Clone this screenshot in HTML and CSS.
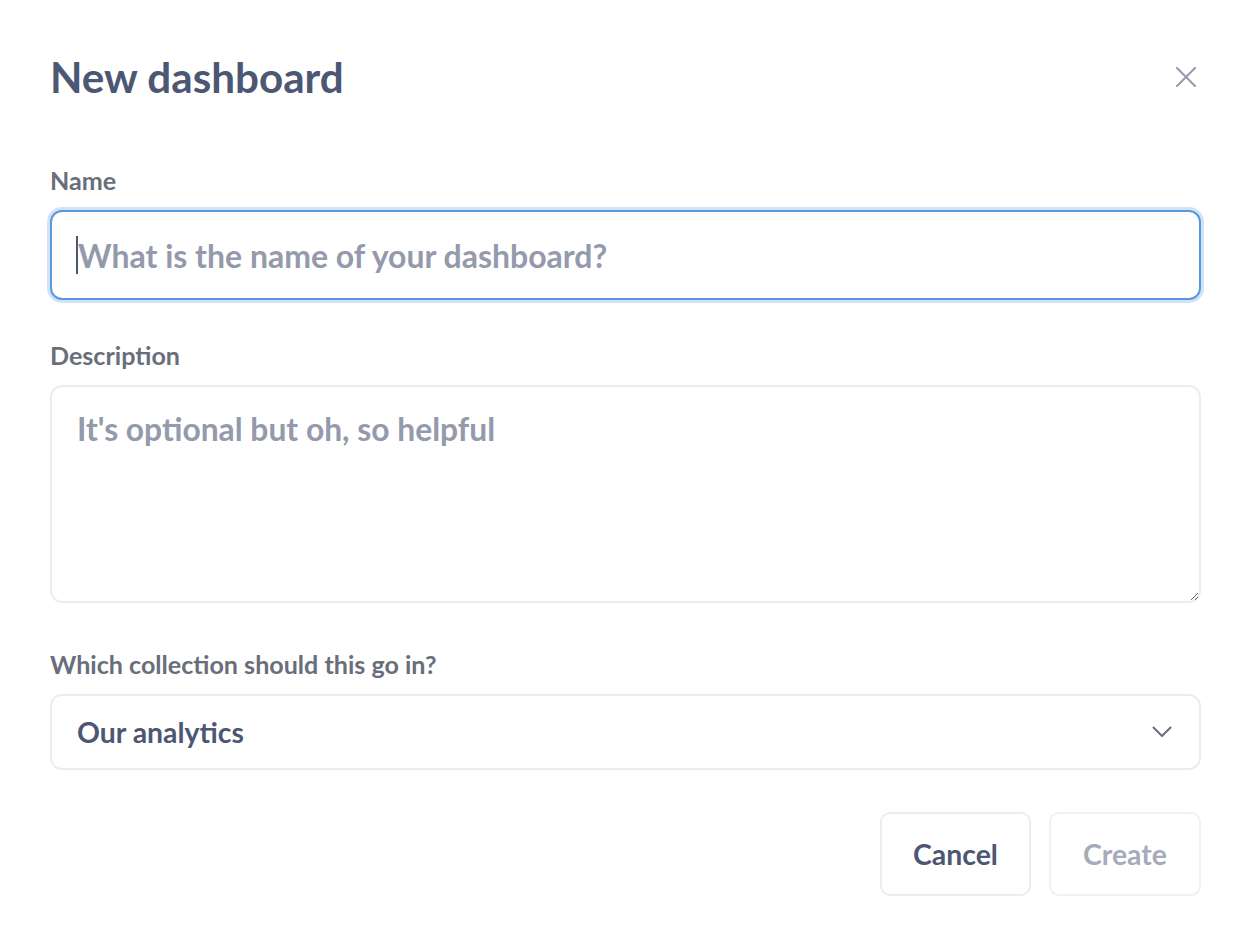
FILE: index.html
```html
<!DOCTYPE html>
<html lang="en">
<head>
<meta charset="utf-8">
<title>New dashboard</title>
<link rel="stylesheet" href="styles.css">
</head>
<body>
<div class="modal">
  <div class="modal-header">
    <h1 class="modal-title">New dashboard</h1>
    <button class="close-btn" aria-label="Close">
      <svg width="20" height="20" viewBox="0 0 20 20"><path d="M1 1 L19 19 M19 1 L1 19" stroke="#949aab" stroke-width="2" stroke-linecap="round" fill="none"/></svg>
    </button>
  </div>
  <form class="form">
    <label class="label label-name" for="name">Name</label>
    <div class="input-wrap">
      <input id="name" class="input input-focused" type="text" placeholder="What is the name of your dashboard?">
      <span class="caret"></span>
    </div>
    <label class="label label-desc" for="desc">Description</label>
    <textarea id="desc" class="textarea" placeholder="It's optional but oh, so helpful"></textarea>
    <label class="label label-coll">Which collection should this go in?</label>
    <div class="select">
      <span class="select-value">Our analytics</span>
      <svg class="chevron" width="20" height="12" viewBox="0 0 20 12"><path d="M1.5 1.5 L10 10 L18.5 1.5" stroke="#696e7b" stroke-width="2" fill="none" stroke-linecap="round" stroke-linejoin="round"/></svg>
    </div>
    <div class="actions">
      <button type="button" class="btn btn-cancel">Cancel</button>
      <button type="button" class="btn btn-create" disabled>Create</button>
    </div>
  </form>
</div>
</body>
</html>
```

FILE: styles.css
```css
* { box-sizing: border-box; }
html, body { margin: 0; padding: 0; background: #fff; }
body { font-family: Lato, "Open Sans", sans-serif; color: #4c5773; }

.modal {
  width: 1254px;
  height: 946px;
  padding: 53px 53px 0 50px;
}

.modal-header {
  display: flex;
  justify-content: space-between;
  align-items: center;
  height: 48px;
}
.modal-title {
  margin: 0;
  font-size: 42.2px;
  line-height: 48px;
  font-weight: 700;
  color: #4c5773;
}
.close-btn {
  background: none;
  border: 0;
  padding: 0;
  margin-right: 5px;
  width: 20px;
  height: 20px;
  display: flex;
}

.form {
  display: flex;
  flex-direction: column;
}

.label {
  display: block;
  font-size: 25.1px;
  line-height: 26px;
  font-weight: 700;
  color: #696e7b;
  margin-bottom: 17px;
}
.label-name { margin-top: 66px; }
.label-desc { margin-top: 42px; }
.label-coll { margin-top: 48px; }

.input, .textarea, .select {
  width: 100%;
  border: 2px solid #eeecec;
  border-radius: 12px;
  background: #fff;
  font-family: Lato, sans-serif;
  font-weight: 700;
  font-size: 32px;
  color: #4c5773;
}
.input-wrap { position: relative; }
.input {
  display: block;
  height: 90px;
  padding: 0 25px 0 26px;
  outline: none;
  caret-color: #4c5773;
}
.caret {
  position: absolute;
  left: 26px;
  top: 26px;
  width: 1.5px;
  height: 38px;
  background: #4c5773;
}
.input-focused {
  border-color: #5b97e0;
  box-shadow: 0 0 0 3px #d1e3f7;
}
.input::placeholder, .textarea::placeholder { color: #949aab; opacity: 1; }

.textarea {
  display: block;
  height: 218px;
  padding: 23px 25px;
  font-size: 31.8px;
  line-height: 38px;
  resize: both;
  outline: none;
}

.select {
  height: 76px;
  display: flex;
  align-items: center;
  justify-content: space-between;
  padding: 0 27px 0 25px;
}
.select-value { font-size: 28.4px; color: #4c5773; }

.actions {
  display: flex;
  justify-content: flex-end;
  gap: 18px;
  margin-top: 42px;
}
.btn {
  height: 84px;
  padding: 0;
  border: 2px solid #eeecec;
  border-radius: 10px;
  background: #fff;
  font-family: Lato, sans-serif;
  font-weight: 700;
  font-size: 28.4px;
  color: #4c5773;
}
.btn-cancel { width: 151px; }
.btn-create { width: 152px; color: #a5abb9; border-color: #f2f1f1; }
```
